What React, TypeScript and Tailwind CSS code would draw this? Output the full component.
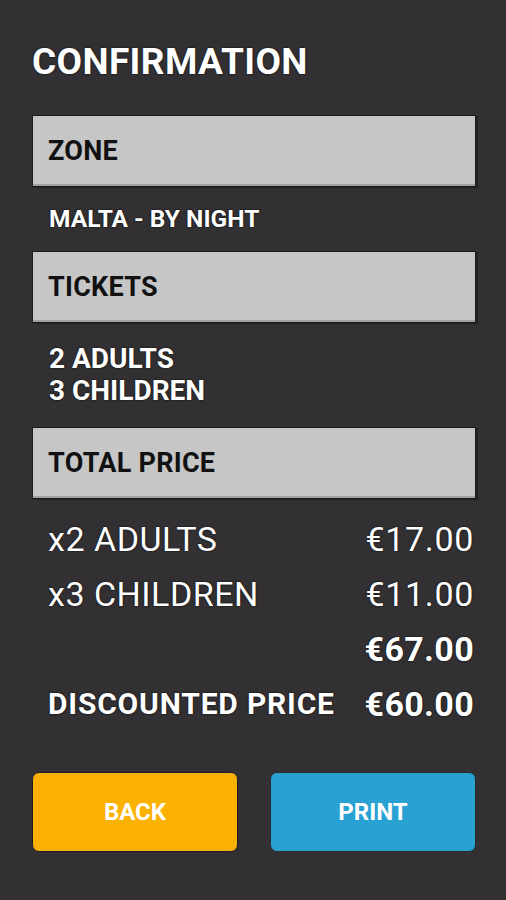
const font = { fontFamily: "Roboto, 'Liberation Sans', sans-serif" };

type Row = { label: string; price: string; boldLabel?: boolean; boldPrice?: boolean };

const rows: Row[] = [
  { label: "x2 ADULTS", price: "€17.00" },
  { label: "x3 CHILDREN", price: "€11.00" },
  { label: "", price: "€67.00", boldPrice: true },
  { label: "DISCOUNTED PRICE", price: "€60.00", boldLabel: true, boldPrice: true },
];

function SectionBox({ title }: { title: string }) {
  return (
    <div className="h-[72px] flex items-center pl-[15px] bg-[#c6c6c6] border border-[#1c1c1c] shadow-[inset_0_-2px_0_#a2a2a2,2px_1px_0_#232224]">
      <span className="text-[27px] leading-none font-bold tracking-[0.01em] text-[#111]">{title}</span>
    </div>
  );
}

export default function App() {
  return (
    <div style={font} className="w-[506px] h-[900px] bg-[#323033] text-white pl-8 pr-[30px] pt-[43px] overflow-hidden">
      <h1 className="h-[36px] text-[37px] leading-none font-bold tracking-[0.01em] [text-shadow:0_0_2px_#000]">CONFIRMATION</h1>

      <div className="mt-[36px]">
        <SectionBox title="ZONE" />
      </div>
      <div className="h-[64px] flex items-center pl-[17px]">
        <span className="text-[24.5px] leading-none font-bold [text-shadow:0_0_2px_#000]">MALTA - BY NIGHT</span>
      </div>

      <SectionBox title="TICKETS" />
      <div className="h-[104px] flex flex-col justify-center pl-[17px] text-[28px] leading-[32px] font-bold [text-shadow:0_0_2px_#000]">
        <span>2 ADULTS</span>
        <span>3 CHILDREN</span>
      </div>

      <SectionBox title="TOTAL PRICE" />

      <div className="mt-3 pl-4 pr-[2px]">
        {rows.map((r, i) => (
          <div key={i} className="h-[55px] flex items-center justify-between [text-shadow:0_0_2px_#000]">
            <span className={r.boldLabel ? "text-[30px] leading-none font-bold tracking-[0.027em]" : "text-[34px] leading-none tracking-[0.015em]"}>{r.label}</span>
            <span className={r.boldPrice ? "text-[34px] leading-none font-bold tracking-[0.01em]" : "text-[34px] leading-none tracking-[0.02em]"}>{r.price}</span>
          </div>
        ))}
      </div>

      <div className="mt-[41px] grid grid-cols-2 gap-8">
        <button className="h-[80px] rounded-[7px] bg-[#fbb102] border border-[#1d1a2a] text-white text-[24px] font-bold">BACK</button>
        <button className="h-[80px] rounded-[7px] bg-[#2aa1d3] border border-[#2a2a2e] text-white text-[24px] font-bold">PRINT</button>
      </div>
    </div>
  );
}
